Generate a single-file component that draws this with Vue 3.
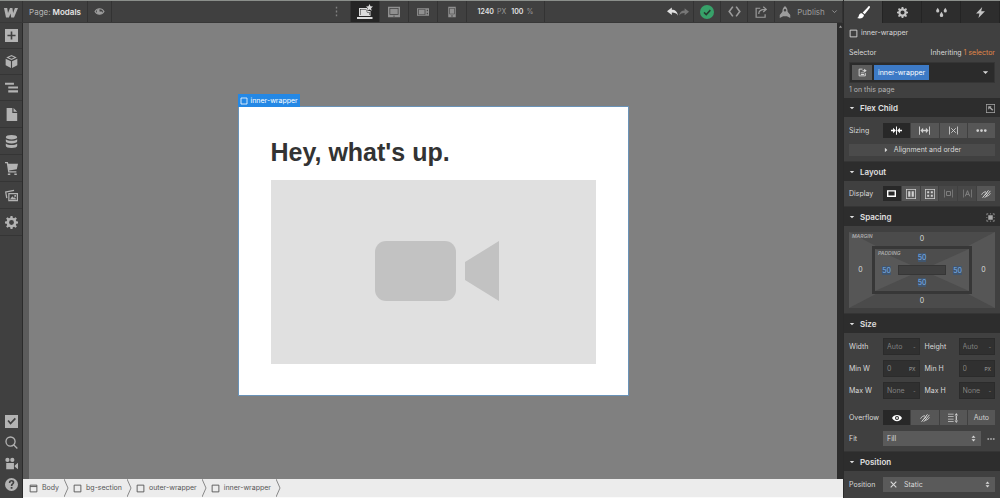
<script setup>
import { h, ref } from 'vue'

const shapes = {
  logo: { f: 'M1 4h3.2l.8 5 2-5h2.4l.7 5 1.800-5H15l-4 9.500H8.200l-.6-4-1.700 4H3z' },
  eye: { f: 'M8 3C4.500 3 1.500 5 0 8c1.500 3 4.500 5 8 5s6.500-2 8-5c-1.500-3-4.500-5-8-5zm0 1.800a3.200 3.200 0 1 1 0 6.400 3.200 3.200 0 0 1 0-6.400zM8 6.500a1.500 1.500 0 1 0 0 3 1.500 1.500 0 0 0 0-3z' },
  preview: { s: 'M1.500 8C3 5.200 5.300 4 8 4s5 1.200 6.500 4C13 10.800 10.700 12 8 12S3 10.800 1.500 8z', f: 'M8 4v4h4a4 4 0 0 1-8 0 4 4 0 0 1 4-4z' },
  add: { f: 'M0 0h16v16H0zM7 3v4H3v2h4v4h2V9h4V7H9V3z' },
  cube: { f: 'M8 0l6.500 3L8 6.200 1.500 3zM.8 4.500l6.500 3.200V16L.8 12.600zM15.200 4.500L8.700 7.700V16l6.500-3.400zM4.500 3L8 4.500 11.500 3 8 1.500z' },
  nav: { f: 'M0 2h11v2.500H0zM4 6.700h12v2.600H4zM4 11.500h12V14H4z' },
  page: { f: 'M2 0h7v6h6v10H2zM10.500 0L15 4.500h-4.500z' },
  data: { f: 'M8 0c4 0 7 1.100 7 2.700S12 5.400 8 5.400 1 4.300 1 2.700 4 0 8 0zM1 5.200c1.500 1.300 4 1.800 7 1.800s5.500-.5 7-1.800v2.600c0 1.600-3 2.700-7 2.700S1 9.400 1 7.800zM1 10.500c1.500 1.300 4 1.800 7 1.800s5.500-.5 7-1.800v2.700c0 1.600-3 2.800-7 2.800s-7-1.200-7-2.800z' },
  cart: { f: 'M0 0h3.500l.6 2H16l-1.500 7-9.500 1.500.3 1H14V13H4L2.200 1.500H0zM3.500 14h3v2h-3zM11.500 14h3v2h-3z' },
  assets: { f: 'M0 3l11-2 .3 1.600-9.600 1.700L3 11l-1.600.3zM4 5h12v10H4zM5.500 6.500v7h9v-7zM6 13l3-4 2 2 1-1 2 3zM11.500 7.500h2v2h-2z' },
  gear: { f: 'M6.800 0h2.400l.4 2.200 1.500.6L13 1.500 14.600 3.100l-1.300 1.900.6 1.500 2.100.4v2.300l-2.100.4-.6 1.500 1.300 1.900-1.600 1.600-1.900-1.300-1.500.6-.4 2.100H6.800l-.4-2.100-1.500-.6L3 14.600 1.400 13l1.300-1.900-.6-1.500L0 9.200V6.900l2.100-.4.600-1.500-1.300-1.900L3 1.500l1.900 1.300 1.500-.6zM8 5a3 3 0 1 0 0 6 3 3 0 0 0 0-6z' },
  audit: { f: 'M0 0h16v16H0zM3 7.500L6.800 12 13.500 5 12 3.300 6.800 8.800 4.700 6z' },
  search: { s: 'M6.800 1.200a5.600 5.600 0 1 1 0 11.200 5.600 5.600 0 0 1 0-11.200zM10.900 11l4.300 4.300' },
  video: { f: 'M3 1a2.600 2.600 0 1 1 0 5.200A2.600 2.600 0 0 1 3 1zM9 1a2.600 2.600 0 1 1 0 5.200A2.600 2.600 0 0 1 9 1zM1.500 7.500h9.500V15H1.500zM12 10.500L16 7v8l-4-3z' },
  help: { f: 'M8 0a8 8 0 1 1 0 16A8 8 0 0 1 8 0zM4.700 6h2c0-1 .5-1.600 1.400-1.600.8 0 1.300.4 1.300 1.100 0 1.300-2.300 1.500-2.300 4.200h2c0-1.800 2.400-2 2.400-4.400 0-1.600-1.300-2.700-3.300-2.700C6 2.600 4.700 3.900 4.700 6zM7 11h2.200v2.200H7z' },
  laptop: { f: 'M2 4h8l1 2 .5 1h2V12H2zM3 5v6h9.500V8h-2L9 5zM3.500 5.500h5.500l1 3h2v2.500H3.500zM0 13h15.500v2H0zM12.500 0l1 2.300 2.500.2-1.900 1.700.6 2.500-2.200-1.300-2.200 1.300.6-2.500L9 2.500l2.500-.2z' },
  tablet: { f: 'M0 1h16v14H0zM2 2.500v9h12v-9zM3 3.500h10v7H3zM7 13h2v1H7z' },
  landscape: { f: 'M0 3h16v10H0zM1.200 4.200v7.600h10V4.200zM2.200 5h8v6h-8zM13 5v2h1.500V5zM13 9v2h1.500V9z' },
  phone: { f: 'M3 1h10v14H3zM4.500 2.500v8.500h7V2.500zM5.300 3.300h5.400v7H5.300zM7 12.500h2V14H7z' },
  undo: { f: 'M7 2v3.500c5 0 8 2.500 9 8.500-2-3.500-4.500-4.500-9-4.500V13L0 7.500z' },
  redo: { f: 'M9 2v3.500c-5 0-8 2.500-9 8.500 2-3.500 4.500-4.500 9-4.500V13l7-5.500z' },
  tick: { s: 'M4 8.500L7 11.500 12.500 5.500' },
  code: { s: 'M6 2L1.500 8 6 14M10 2l4.500 6-4.500 6' },
  share: { s: 'M7 3H1.500v12h12v-4M5 10.500c0-4 2-6 9-6M11 1l4 3.500L11 8' },
  rocket: { f: 'M8 0c2.500 2 3.500 4.500 3.500 7.500L15 12v4l-4.500-2.500h-5L1 16v-4l3.500-4.500C4.500 4.500 5.500 2 8 0zM8 4a1.700 1.700 0 1 0 0 3.400A1.700 1.700 0 0 0 8 4z' },
  down: { s: 'M3 5.500l5 5 5-5' },
  brush: { f: 'M15.500.2c1 .8.300 2-.4 3L9.500 10 7 8l6-6.300c.8-.9 1.700-2 2.500-1.500zM6 8.800L8.600 11c0 3-3.600 5.500-8.600 3.800 2.500-.8 1.800-2.500 2.800-4.300.7-1.200 2-1.800 3.200-1.700z' },
  drops: { f: 'M2.500 1c1.200 2 2.300 3.200 2.300 4.700a2.300 2.300 0 0 1-4.600 0C.2 4.200 1.300 3 2.500 1zM13.500 1c1.200 2 2.300 3.200 2.300 4.700a2.300 2.300 0 0 1-4.600 0C11.200 4.200 12.300 3 13.500 1zM8 7c1.300 2.200 2.500 3.500 2.500 5.200a2.500 2.500 0 0 1-5 0C5.500 10.500 6.700 9.200 8 7z' },
  bolt: { f: 'M10.500 0L1.500 9.500h5L5 16l9.500-9.800H9z' },
  box: { s: 'M2 2h12v12H2z' },
  body: { s: 'M2 2h12v12H2zM2 4.500h12' },
  state: { s: 'M8 2H2v12h11V9', f: 'M5 8h6v1.500H5zM5 10.800h6v1.500H5zM8 4h3V1.500L15.500 5 11 8V5.600H8z' },
  caret: { f: 'M2 5h12l-6 6.500z' },
  caretUp: { f: 'M3 12h10L8 5z' },
  caretRight: { f: 'M5 2l6.500 6L5 14z' },
  corner: { f: 'M0 0h16v16H0zM1.200 1.200v13.600h13.600V1.200zM4 4h6L8.300 5.700l4.700 4.700-1.800 1.800-4.800-4.800L4 10z' },
  inset: { f: 'M4 4h8v8H4zM1 1h3v1.200H2.200V4H1zM12 1h3v3h-1.200V2.200H12zM1 12h1.200v1.800H4V15H1zM13.800 12H15v3h-3v-1.200h1.800zM1 7h1.200v2H1zM13.800 7H15v2h-1.200zM7 1h2v1.200H7zM7 13.800h2V15H7z' },
  shrink: { f: 'M7.300 2h1.400v12H7.300zM0 7h3V4l4 4-4 4V9H0zM16 7h-3V4L9 8l4 4V9h3z' },
  grow: { f: 'M0 2h1.400v12H0zM14.600 2H16v12h-1.400zM2 8l4-4v3h4V4l4 4-4 4V9H6v3z' },
  none: { f: 'M0 1h1.500v14H0zM14.500 1H16v14h-1.500z', s: 'M4 4l8 8M12 4l-8 8' },
  more: { f: 'M2.500 6a2 2 0 1 1 0 4 2 2 0 0 1 0-4zM8 6a2 2 0 1 1 0 4 2 2 0 0 1 0-4zM13.500 6a2 2 0 1 1 0 4 2 2 0 0 1 0-4z' },
  dots: { f: 'M7 1h2v2.500H7zM7 6.700h2v2.600H7zM7 12.500h2V15H7z' },
  block: { f: 'M0 2h16v12H0zM2.500 4.500v7h11v-7z' },
  flex: { f: 'M0 0h16v16H0zM1.200 1.200v13.600h13.600V1.200zM3.500 3.500h3.500v9H3.500zM9 3.500h3.500v9H9z' },
  grid: { f: 'M0 0h16v16H0zM1.200 1.200v13.600h13.600V1.200zM3.500 3.500h3.200v3.200H3.500zM9.300 3.500h3.200v3.200H9.300zM3.500 9.300h3.200v3.200H3.500zM9.300 9.300h3.200v3.200H9.300z' },
  inlineBlock: { f: 'M0 1h1.200v14H0zM14.800 1H16v14h-1.200z', s: 'M4.500 4.500h7v7h-7z' },
  inline: { f: 'M0 1h1.200v14H0zM14.800 1H16v14h-1.200z', s: 'M4 13l4-10 4 10M5.500 9.500h5' },
  hidden: { s: 'M1 9c1.500-3 4-4.500 7-4.500M15 7c-1.500 3-4 4.500-7 4.500M2.500 14L12 2M6 14L15 3M6 10l4-4' },
  scroll: { f: 'M0 1h9v1.500H0zM0 5h9v1.500H0zM0 9h9v1.500H0zM0 13h9v1.500H0zM12.300 3h2v10h-2zM10.500 4L13.300 0 16 4zM10.500 12l2.800 4 2.700-4z' },
  cross: { s: 'M3 3l10 10M13 3L3 13' },
  sort: { f: 'M3.500 6.500L8 1l4.500 5.500zM3.500 9.500L8 15l4.500-5.500z' }
}

const Icon = ({ name, size = 12, weight = 1.6 }) =>
  h('svg', { class: 'icon', width: size, height: size, viewBox: '0 0 16 16', 'aria-hidden': 'true' }, [
    shapes[name].f && h('path', { d: shapes[name].f, fill: 'currentColor', 'fill-rule': 'evenodd' }),
    shapes[name].s && h('path', { d: shapes[name].s, fill: 'none', stroke: 'currentColor', 'stroke-width': weight })
  ])
Icon.props = ['name', 'size', 'weight']

const tools = [['add', 'Add elements'], ['cube', 'Symbols'], ['nav', 'Navigator'], ['page', 'Pages'], ['data', 'CMS collections'], ['cart', 'Ecommerce'], ['assets', 'Assets'], ['gear', 'Settings']]
const helpers = [['audit', 'Audit'], ['search', 'Search'], ['video', 'Video tutorials'], ['help', 'Help']]
const devices = [['laptop', 'Desktop'], ['tablet', 'Tablet'], ['landscape', 'Mobile landscape'], ['phone', 'Mobile portrait']]
const tabs = [['brush', 'Style'], ['gear', 'Settings'], ['drops', 'Style manager'], ['bolt', 'Interactions']]
const sizing = [['shrink', 'Shrink if needed'], ['grow', 'Grow if possible'], ['none', "Don't shrink or grow"], ['more', 'More sizing options']]
const display = [['block', 'Block'], ['flex', 'Flex'], ['grid', 'Grid'], ['inlineBlock', 'Inline block'], ['inline', 'Inline'], ['hidden', 'None']]
const crumbs = ['Body', 'bg-section', 'outer-wrapper', 'inner-wrapper']
const sizes = [
  { id: 'w', label: 'Width', value: 'Auto', unit: '-' },
  { id: 'h', label: 'Height', value: 'Auto', unit: '-' },
  { id: 'minw', label: 'Min W', value: '0', unit: 'PX' },
  { id: 'minh', label: 'Min H', value: '0', unit: 'PX' },
  { id: 'maxw', label: 'Max W', value: 'None', unit: '-' },
  { id: 'maxh', label: 'Max H', value: 'None', unit: '-' }
]
const sides = ['top', 'left', 'right', 'bottom']
const device = ref('laptop')
const tab = ref('brush')
const sizingMode = ref('shrink')
const displayMode = ref('block')
const overflow = ref('eye')
</script>

<template>
  <div class="app">
    <header class="topbar">
      <a class="logo" href="#" aria-label="Dashboard"><Icon name="logo" size="16" /></a>
      <button class="page-name">Page: <b>Modals</b></button>
      <button class="preview" aria-label="Preview"><Icon name="preview" size="11" /></button>
      <div class="spacer before"></div>
      <button class="dots" aria-label="Breakpoints"><Icon name="dots" size="11" /></button>
      <button v-for="[name, label] in devices" :key="name" class="device" :class="{ on: device === name }" :aria-label="label" @click="device = name">
        <Icon :name="name" :size="name === 'laptop' ? 16 : 12" />
      </button>
      <button class="dims"><b>1240</b> PX <b class="zoom">100</b> %</button>
      <div class="spacer after"></div>
      <div class="history">
        <button aria-label="Undo" class="undo"><Icon name="undo" size="11" /></button>
        <button aria-label="Redo" class="redo"><Icon name="redo" size="10" /></button>
      </div>
      <button class="act" aria-label="Saved"><span class="saved"><Icon name="tick" size="12" weight="2" /></span></button>
      <button class="act" aria-label="Export code"><Icon name="code" size="13" weight="2" /></button>
      <button class="act" aria-label="Share"><Icon name="share" size="12" weight="1.6" /></button>
      <button class="publish"><Icon name="rocket" size="12" />Publish<Icon name="down" size="7" weight="2" /></button>
    </header>

    <nav class="tools" aria-label="Tools">
      <button v-for="[name, label] in tools" :key="name" :aria-label="label"><Icon :name="name" size="13" /></button>
      <div class="helpers">
        <button v-for="[name, label] in helpers" :key="name" :aria-label="label"><Icon :name="name" size="13" /></button>
      </div>
    </nav>

    <main class="stage">
      <div class="frame">
        <span class="tag"><Icon name="box" size="8" />inner-wrapper</span>
        <h1>Hey, what's up.</h1>
        <div class="media">
          <svg width="131" height="62" viewBox="-7 0 131 62" aria-hidden="true">
            <rect width="81" height="60" rx="11" fill="#c2c2c2" />
            <path d="M90 21L124 0v60L90 39z" fill="#c2c2c2" />
          </svg>
        </div>
      </div>
      <span class="scroll-up"><Icon name="caretUp" size="5" /></span>
    </main>

    <nav class="crumbs" aria-label="Element path">
      <a v-for="(c, i) in crumbs" :key="c" href="#">
        <Icon :name="i ? 'box' : 'body'" size="9" />{{ c }}
        <svg class="chev" width="5" height="18" viewBox="0 0 5 18" aria-hidden="true"><path d="M0 0l4 9-4 9" fill="none" stroke="#888" /></svg>
      </a>
    </nav>

    <aside class="panel">
      <div class="tabs">
        <button v-for="[name, label] in tabs" :key="name" :class="{ on: tab === name }" :aria-label="label" @click="tab = name">
          <Icon :name="name" :size="name === 'brush' ? 13 : 11" />
        </button>
      </div>

      <section class="selector">
        <p class="element"><Icon name="box" size="9" />inner-wrapper</p>
        <p class="inherit"><span>Selector</span><span>Inheriting <a href="#">1 selector</a></span></p>
        <div class="picker">
          <button class="state" aria-label="Tag selector"><Icon name="state" size="9" /></button>
          <button class="class">inner-wrapper</button>
          <button class="open" aria-label="States"><Icon name="caret" size="7" /></button>
        </div>
        <p class="count">1 on this page</p>
      </section>

      <h2><button><Icon name="caret" size="6" />Flex Child</button><Icon name="corner" size="9" /></h2>
      <section class="rows">
        <div class="row">
          <span>Sizing</span>
          <div class="seg" role="group" aria-label="Sizing">
            <button v-for="[name, label] in sizing" :key="name" :class="{ on: sizingMode === name }" :aria-label="label" @click="sizingMode = name"><Icon :name="name" :size="name === 'none' ? 9 : 11" /></button>
          </div>
        </div>
        <button class="align"><Icon name="caretRight" size="6" />Alignment and order</button>
      </section>

      <h2><button><Icon name="caret" size="6" />Layout</button></h2>
      <section class="rows short">
        <div class="row">
          <span>Display</span>
          <div class="seg" role="group" aria-label="Display">
            <button v-for="[name, label] in display" :key="name" :class="[name, { on: displayMode === name }]" :aria-label="label" @click="displayMode = name"><Icon :name="name" :size="name === 'block' || name.startsWith('inline') ? 9 : 10" /></button>
          </div>
        </div>
      </section>

      <h2><button><Icon name="caret" size="6" />Spacing</button><Icon name="inset" size="9" /></h2>
      <section class="rows">
        <div class="spacing margin">
          <svg class="facets" viewBox="0 0 100 100" preserveAspectRatio="none" aria-hidden="true"><path d="M0 0L50 50 0 100zM100 0L50 50l50 50z" fill="#565656" /></svg>
          <span class="name">MARGIN</span>
          <button v-for="s in sides" :key="s" :class="s" :aria-label="'Margin ' + s">0</button>
          <div class="spacing padding">
            <svg class="facets" viewBox="0 0 100 100" preserveAspectRatio="none" aria-hidden="true"><path d="M0 0L50 50 0 100zM100 0L50 50l50 50z" fill="#585858" /></svg>
            <span class="name">PADDING</span>
            <button v-for="s in sides" :key="s" :class="s" :aria-label="'Padding ' + s"><i>50</i></button>
            <div class="core"></div>
          </div>
        </div>
      </section>

      <h2><button><Icon name="caret" size="6" />Size</button></h2>
      <section class="rows size">
        <div class="sizes">
          <template v-for="s in sizes" :key="s.id">
            <label :for="s.id">{{ s.label }}</label>
            <span class="field"><input :id="s.id" :value="s.value" /><button :aria-label="s.label + ' unit'">{{ s.unit }}</button></span>
          </template>
        </div>
        <div class="row">
          <span>Overflow</span>
          <div class="seg" role="group" aria-label="Overflow">
            <button :class="{ on: overflow === 'eye' }" aria-label="Visible" @click="overflow = 'eye'"><Icon name="eye" size="10" /></button>
            <button :class="{ on: overflow === 'hidden' }" aria-label="Hidden" @click="overflow = 'hidden'"><Icon name="hidden" size="10" /></button>
            <button :class="{ on: overflow === 'scroll' }" aria-label="Scroll" @click="overflow = 'scroll'"><Icon name="scroll" size="10" /></button>
            <button :class="{ on: overflow === 'auto' }" @click="overflow = 'auto'">Auto</button>
          </div>
        </div>
        <div class="row">
          <label for="fit">Fit</label>
          <span class="drop"><select id="fit"><option>Fill</option><option>Contain</option><option>Cover</option></select><Icon name="sort" size="7" /></span>
          <button class="extra" aria-label="Fit options"><Icon name="more" size="8" /></button>
        </div>
      </section>

      <h2><button><Icon name="caret" size="6" />Position</button></h2>
      <section class="rows last">
        <div class="row">
          <label for="pos">Position</label>
          <span class="drop static"><Icon name="cross" size="9" weight="2" /><select id="pos"><option>Static</option><option>Relative</option><option>Absolute</option></select><Icon name="sort" size="7" /></span>
        </div>
      </section>
    </aside>
  </div>
</template>

<style>
body { background: #404040; }
</style>

<style scoped>
.app {
  display: grid;
  grid-template: 23px minmax(0, 1fr) 19px / 23px minmax(0, 1fr) 157px;
  height: 100vh;
  overflow: hidden;
  box-sizing: border-box;
  font: 7px/10px Inter, "Liberation Sans", sans-serif;
  color: #d9d9d9;
}
.app * { box-sizing: border-box; }
button, input, select { font: inherit; color: inherit; border: 0; padding: 0; margin: 0; background: none; border-radius: 0; min-width: 0; }
button { display: flex; align-items: center; justify-content: center; cursor: pointer; }
a { color: inherit; text-decoration: none; }
p, h1, h2 { margin: 0; }
.icon { display: block; flex: none; }

.topbar { grid-column: 1 / 3; display: flex; background: #404040; border-top: 1px solid #8b8f8b; border-bottom: 1px solid #383838; color: #9c9c9c; font-size: 8px; }
.topbar > button { border-right: 1px solid #333; }
.logo { width: 23px; display: flex; align-items: center; justify-content: center; color: #b0b0b0; border-right: 1px solid #333; }
.page-name { width: 65px; gap: 2px; color: #b5b5b5; }
.page-name b { color: #e6e6e6; font-weight: 600; }
.preview { width: 24px; }
.spacer.before { flex: 9; }
.spacer.after { flex: 5; }
.dots { width: 28px; color: #808080; }
.device { width: 29px; color: #909090; }
.device.on { background: #252525; color: #dcdcdc; }
.dims { width: 78px; gap: 3px; color: #999; font-size: 7px; }
.dims b { font-weight: 600; color: #e2e2e2; }
.dims .zoom { margin-left: 2px; }
.history { display: flex; width: 32px; border-right: 1px solid #333; justify-content: center; gap: 1px; }
.undo { color: #e0e0e0; }
.redo { color: #777; }
.act { width: 27px; }
.saved { width: 14px; height: 14px; border-radius: 50%; background: #37a169; color: #263b2f; display: flex; align-items: center; justify-content: center; }
.publish { width: 68px; gap: 6px; }

.tools { grid-row: 2 / 4; display: flex; flex-direction: column; background: #404040; border-right: 1px solid #2b2b2b; color: #b3b3b3; }
.tools > button { height: 26px; flex: none; border-bottom: 1px solid #353535; }
.tools > button:nth-child(n + 4) { height: 27px; }
.helpers { margin-top: auto; padding-bottom: 3px; }
.helpers button { width: 100%; height: 21px; }

.stage { position: relative; display: flex; align-items: center; justify-content: center; background: #808080; border-left: 6px solid #5c5c5c; border-right: 6px solid #2d2d2d; }
.scroll-up { position: absolute; right: -6px; top: 1px; color: #999; }
.frame { position: relative; width: 391px; max-width: 90%; padding: 31px 32px; background: #fff; border: 1px solid #6a93b8; }
.tag { position: absolute; left: -1px; bottom: 100%; display: flex; align-items: center; gap: 3px; height: 13px; padding: 0 2px; background: #2488e5; color: #fff; }
.frame h1 { font: bold 25px/28px "Liberation Sans", Arial, sans-serif; color: #333; margin-bottom: 14px; }
.media { height: 184px; display: flex; align-items: center; justify-content: center; background: #e0e0e0; }

.crumbs { grid-column: 2; grid-row: 3; display: flex; background: #ececec; border-bottom: 1px solid #fafafa; color: #555; padding-left: 6px; }
.crumbs a { display: flex; align-items: center; gap: 4px; padding-right: 4px; }
.chev { margin-left: 1px; }

.panel { grid-column: 3; grid-row: 1 / 4; min-height: 0; overflow: hidden; background: #404040; border-left: 1px solid #2b2b2b; }
.tabs { display: flex; height: 23px; border-top: 1px solid #8b8f8b; }
.tabs button { flex: 1; background: #2d2d2d; border-right: 1px solid #242424; color: #c4c4c4; }
.tabs button.on { background: #404040; color: #fff; }
.selector { padding: 5px 5px 3px; }
.element { display: flex; align-items: center; gap: 3px; margin-bottom: 10px; }
.inherit { display: flex; justify-content: space-between; margin-bottom: 4px; }
.inherit a { color: #e0884a; }
.picker { display: flex; align-items: center; gap: 2px; height: 21px; padding: 2px; background: #2b2b2b; border: 1px solid #353535; }
.state { width: 20px; height: 15px; background: #5c5c5c; }
.class { height: 15px; padding: 0 4px; background: #3d7ac6; color: #fff; }
.open { margin-left: auto; width: 14px; height: 15px; }
.count { margin-top: 2px; color: #b5b5b5; }

h2 { display: flex; justify-content: space-between; align-items: center; height: 19px; padding: 1px 5px 0; background: #2d2d2d; font-size: 8px; font-weight: 600; color: #e0e0e0; }
h2 button { gap: 5px; }
h2 > .icon { color: #a8a8a8; }
.rows { display: flex; flex-direction: column; gap: 6px; padding: 6px 5px 5px; border-bottom: 1px solid #353535; }
.rows.short { padding-top: 5px; }
.row { display: flex; align-items: center; }
.row > span:first-child, .row > label { flex: 0 0 34px; }
.seg { display: flex; flex: 1; gap: 1px; height: 15px; }
.seg button { flex: 1; background: #565656; color: #d0d0d0; }
.seg button.on { background: #282828; color: #fff; }
.seg .inlineBlock, .seg .inline { background: #484848; color: #888; }
.align { height: 12px; gap: 5px; background: #4b4b4b; }

.spacing { position: relative; display: grid; background: #4b4b4b; }
.spacing > button { z-index: 1; }
.margin { grid-template: 14px 48px 14px / 23px minmax(0, 1fr) 23px; }
.padding { grid-area: 2 / 2; grid-template: 15px 10px 15px / 23px minmax(0, 1fr) 23px; align-content: center; border: 3px solid #373737; background: #4d4d4d; color: #79b0ec; }
.facets { position: absolute; inset: 0; width: 100%; height: 100%; }
.name { position: absolute; left: 3px; top: 0; font-size: 5px; line-height: 8px; font-style: italic; font-weight: 600; color: #ababab; }
.top { grid-area: 1 / 2; }
.left { grid-area: 2 / 1; }
.right { grid-area: 2 / 3; }
.bottom { grid-area: 3 / 2; }
.padding i { font-style: normal; line-height: 9px; background: #41566e; }
.core { grid-area: 2 / 2; z-index: 1; background: #404040; border: 1px solid #363636; }

.size { padding-top: 5px; }
.sizes { display: grid; grid-template-columns: 34px minmax(0, 1fr) 39px minmax(0, 1fr); row-gap: 5px; align-items: center; padding-bottom: 5px; }
.sizes label:nth-of-type(even) { padding-left: 5px; }
.field { display: flex; height: 17px; background: #303030; border: 1px solid #2b2b2b; color: #808080; padding: 0 3px; }
.field input { flex: 1; width: 0; }
.field button { font-size: 5px; color: #a0a0a0; }
.drop { position: relative; flex: 1; display: flex; align-items: center; height: 15px; padding: 0 4px; background: #5a5a5a; }
.drop select { appearance: none; flex: 1; height: 15px; }
.drop.static { padding-left: 6px; }
.static select { padding-left: 6px; }
.extra { width: 14px; justify-content: flex-end; color: #a0a0a0; }
.last { border-bottom: 0; }
</style>
